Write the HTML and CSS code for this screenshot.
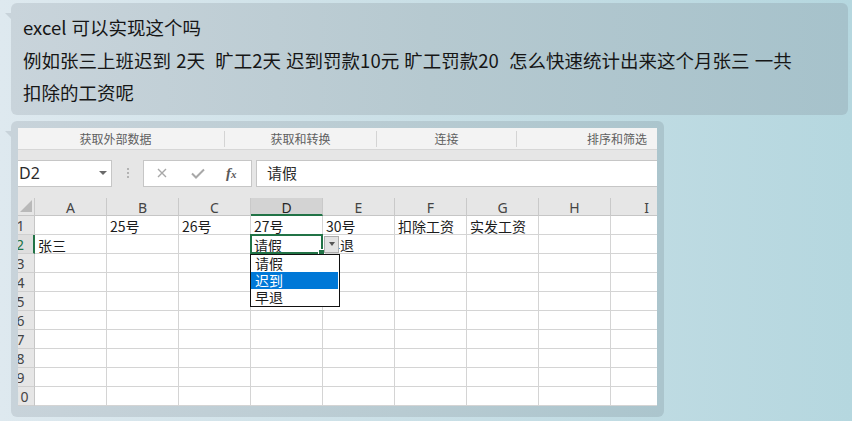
FILE: index.html
```html
<!DOCTYPE html>
<html lang="zh-CN">
<head>
<meta charset="utf-8">
<title>chat</title>
<link rel="stylesheet" href="styles.css">
</head>
<body>
<div class="chat">
  <div class="bubble msg">
    <div class="line">excel 可以实现这个吗</div>
    <div class="line">例如张三上班迟到 2天  旷工2天 迟到罚款10元 旷工罚款20  怎么快速统计出来这个月张三 一共</div>
    <div class="line">扣除的工资呢</div>
  </div>
  <div class="bubble pic">
    <div class="excel">
      <div class="excel-inner">
        <div class="ribbon">
          <div class="grp g1">获取外部数据</div>
          <div class="grp g2">获取和转换</div>
          <div class="grp g3">连接</div>
          <div class="grp g4">排序和筛选</div>
        </div>
        <div class="strip"></div>
        <div class="fbar">
          <div class="namebox"><span class="nb-text">D2</span><span class="nb-arrow"></span></div>
          <div class="dots"><i></i><i></i><i></i></div>
          <div class="fxbox">
            <svg class="ic-x" width="10" height="10" viewBox="0 0 10 10"><path d="M1 1L9 9M9 1L1 9" stroke="#a8a8a8" stroke-width="1.4" fill="none"/></svg>
            <svg class="ic-ok" width="14" height="11" viewBox="0 0 14 11"><path d="M1 5.5L5 9.5L13 1.5" stroke="#a8a8a8" stroke-width="2" fill="none"/></svg>
            <span class="ic-fx">f<span class="fx-x">x</span></span>
          </div>
          <div class="finput">请假</div>
        </div>
        <div class="strip strip2"></div>
        <div class="sheet">
          <div class="hc corner"><svg width="12" height="12" viewBox="0 0 12 12"><polygon points="12,0 12,12 0,12" fill="#b9b9b9"/></svg></div>
          <div class="hc">A</div><div class="hc">B</div><div class="hc">C</div><div class="hc hsel">D</div><div class="hc">E</div><div class="hc">F</div><div class="hc">G</div><div class="hc">H</div><div class="hc">I</div>

          <div class="rh">1</div>
          <div class="c"></div><div class="c">25号</div><div class="c">26号</div><div class="c">27号</div><div class="c">30号</div><div class="c">扣除工资</div><div class="c">实发工资</div><div class="c"></div><div class="c"></div>

          <div class="rh rsel">2</div>
          <div class="c">张三</div><div class="c"></div><div class="c"></div><div class="c">请假</div><div class="c">早退</div><div class="c"></div><div class="c"></div><div class="c"></div><div class="c"></div>

          <div class="rh">3</div>
          <div class="c"></div><div class="c"></div><div class="c"></div><div class="c"></div><div class="c"></div><div class="c"></div><div class="c"></div><div class="c"></div><div class="c"></div>
          <div class="rh">4</div>
          <div class="c"></div><div class="c"></div><div class="c"></div><div class="c"></div><div class="c"></div><div class="c"></div><div class="c"></div><div class="c"></div><div class="c"></div>
          <div class="rh">5</div>
          <div class="c"></div><div class="c"></div><div class="c"></div><div class="c"></div><div class="c"></div><div class="c"></div><div class="c"></div><div class="c"></div><div class="c"></div>
          <div class="rh">6</div>
          <div class="c"></div><div class="c"></div><div class="c"></div><div class="c"></div><div class="c"></div><div class="c"></div><div class="c"></div><div class="c"></div><div class="c"></div>
          <div class="rh">7</div>
          <div class="c"></div><div class="c"></div><div class="c"></div><div class="c"></div><div class="c"></div><div class="c"></div><div class="c"></div><div class="c"></div><div class="c"></div>
          <div class="rh">8</div>
          <div class="c"></div><div class="c"></div><div class="c"></div><div class="c"></div><div class="c"></div><div class="c"></div><div class="c"></div><div class="c"></div><div class="c"></div>
          <div class="rh">9</div>
          <div class="c"></div><div class="c"></div><div class="c"></div><div class="c"></div><div class="c"></div><div class="c"></div><div class="c"></div><div class="c"></div><div class="c"></div>
          <div class="rh">10</div>
          <div class="c"></div><div class="c"></div><div class="c"></div><div class="c"></div><div class="c"></div><div class="c"></div><div class="c"></div><div class="c"></div><div class="c"></div>

          <div class="sel"><span class="handle"></span></div>
          <div class="ddbtn"><span class="dd-tri"></span></div>
          <div class="ddlist">
            <div class="dd-item">请假</div>
            <div class="dd-item active">迟到</div>
            <div class="dd-item">早退</div>
          </div>
        </div>
      </div>
    </div>
  </div>
</div>
</body>
</html>
```

FILE: styles.css
```css
html, body {
  margin: 0;
  padding: 0;
  height: 100%;
}
body {
  background: linear-gradient(to right, #dee9ef 0%, #c9dfe6 50%, #b5d7df 100%);
  font-family: "Noto Sans CJK SC", "Noto Sans", sans-serif;
  color: #1b1b1b;
  overflow: hidden;
}
.chat {
  display: flex;
  flex-direction: column;
  align-items: flex-start;
  gap: 6px;
  padding: 3px 0 0 11px;
}
.bubble {
  position: relative;
  box-sizing: border-box;
  border-radius: 6px;
}
.bubble::before {
  content: "";
  position: absolute;
  left: -6px;
  top: 10px;
  width: 0;
  height: 0;
  border-top: 6px solid #c8d3da;
  border-left: 6px solid transparent;
}
.msg {
  width: 837px;
  padding: 8px 12px 6px 12px;
  background: linear-gradient(to right, #c9d4db 0%, #b6c9d0 50%, #a6c2cb 100%);
}
.line {
  font-size: 18.5px;
  line-height: 32.5px;
  white-space: pre;
  word-spacing: 1px;
  color: #161616;
}
.pic {
  width: 653px;
  padding: 7px 7px 11px 7px;
  background: linear-gradient(to right, #c8d3da 0%, #b8cbd2 60%, #abc5cd 100%);
}
.excel {
  width: 639px;
  overflow: hidden;
  background: #ffffff;
}
.excel-inner {
  margin-left: -11px;
  width: 700px;
}

/* ribbon group labels */
.ribbon {
  display: flex;
  height: 21px;
  background: #f3f3f3;
  border-bottom: 1px solid #d6d6d6;
}
.grp {
  flex: none;
  height: 16px;
  margin-top: 3px;
  line-height: 16px;
  font-size: 12px;
  color: #5f5f5f;
  text-align: center;
  border-right: 1px solid #d4d4d4;
  box-sizing: border-box;
}
.g1 { width: 218px; }
.g2 { width: 152px; }
.g3 { width: 140px; }
.g4 { width: 200px; border-right: none; }

.strip {
  height: 10px;
  background: #e6e6e6;
}
.strip2 {
  height: 11px;
}

/* formula bar */
.fbar {
  display: flex;
  height: 27px;
  background: #e6e6e6;
}
.namebox {
  box-sizing: border-box;
  width: 105px;
  background: #fff;
  border: 1px solid #c6c6c6;
  display: flex;
  align-items: center;
  padding-left: 11px;
  padding-right: 4px;
}
.nb-text {
  font-family: "Noto Sans", "Liberation Sans", sans-serif;
  font-size: 16px;
  color: #2b2b2b;
}
.nb-arrow {
  margin-left: auto;
  width: 0;
  height: 0;
  border-left: 4px solid transparent;
  border-right: 4px solid transparent;
  border-top: 4px solid #6a6a6a;
}
.dots {
  width: 31px;
  display: flex;
  flex-direction: column;
  align-items: center;
  justify-content: center;
  gap: 2px;
}
.dots i {
  display: block;
  width: 2px;
  height: 2px;
  background: #b3b3b3;
}
.fxbox {
  box-sizing: border-box;
  width: 109px;
  background: #fff;
  border: 1px solid #c6c6c6;
  display: flex;
  align-items: center;
  padding-left: 13px;
}
.ic-x { flex: none; }
.ic-ok { flex: none; margin-left: 24px; }
.ic-fx {
  margin-left: 21px;
  font-family: "Liberation Serif", "DejaVu Serif", serif;
  font-style: italic;
  font-weight: bold;
  font-size: 15px;
  color: #5a5a5a;
  line-height: 1;
}
.fx-x {
  font-size: 11px;
}
.finput {
  flex: 1;
  margin-left: 4px;
  box-sizing: border-box;
  background: #fff;
  border: 1px solid #c6c6c6;
  border-right: none;
  padding-left: 10px;
  font-size: 15px;
  line-height: 24px;
  color: #2b2b2b;
}

/* sheet */
.sheet {
  position: relative;
  display: grid;
  grid-template-columns: 28px repeat(9, 72px);
  grid-template-rows: 18px repeat(10, 19px);
  background: #fff;
}
.hc {
  box-sizing: border-box;
  background: #e6e6e6;
  border-right: 1px solid #c9c9c9;
  border-bottom: 1px solid #c6c6c6;
  text-align: center;
  font-family: "Noto Sans", "Liberation Sans", sans-serif;
  font-size: 14px;
  line-height: 17px;
  padding-top: 1px;
  color: #444;
}
.hc.corner {
  display: flex;
  align-items: flex-end;
  justify-content: flex-end;
  padding: 0 2px 3px 0;
}
.hc.hsel {
  background: #d3d3d3;
  border-bottom: 2px solid #217346;
  color: #262626;
}
.rh {
  box-sizing: border-box;
  background: #e6e6e6;
  border-right: 1px solid #c6c6c6;
  border-bottom: 1px solid #cfcfcf;
  text-align: center;
  font-family: "Noto Sans", "Liberation Sans", sans-serif;
  font-size: 14px;
  line-height: 17px;
  padding-top: 1px;
  color: #444;
}
.rh.rsel {
  background: #dedede;
  color: #217346;
  border-right: 2px solid #217346;
}
.c {
  box-sizing: border-box;
  border-right: 1px solid #d4d4d4;
  border-bottom: 1px solid #d4d4d4;
  padding: 2px 0 0 3px;
  font-size: 14px;
  line-height: 17px;
  white-space: nowrap;
  color: #1c1c1c;
}

/* selection and data validation dropdown (overlays) */
.sel {
  position: absolute;
  left: 243px;
  top: 36px;
  width: 73px;
  height: 20px;
  box-sizing: border-box;
  border: 2px solid #217346;
}
.handle {
  position: absolute;
  right: -4px;
  bottom: -4px;
  width: 5px;
  height: 5px;
  background: #217346;
  border: 1px solid #fff;
}
.ddbtn {
  position: absolute;
  left: 317px;
  top: 38px;
  width: 15px;
  height: 17px;
  box-sizing: border-box;
  background: #e3e3e3;
  border: 1px solid #adadad;
  display: flex;
  align-items: center;
  justify-content: center;
}
.dd-tri {
  width: 0;
  height: 0;
  border-left: 3.5px solid transparent;
  border-right: 3.5px solid transparent;
  border-top: 4px solid #555;
}
.ddlist {
  position: absolute;
  left: 243px;
  top: 56px;
  width: 90px;
  height: 53px;
  box-sizing: border-box;
  background: #fff;
  border: 1px solid #111;
}
.dd-item {
  height: 17px;
  line-height: 17px;
  padding-left: 4px;
  font-size: 14px;
  color: #1c1c1c;
  margin-right: 1px;
  overflow: hidden;
}
.dd-item.active {
  background: #0078d7;
  color: #fff;
}
```
